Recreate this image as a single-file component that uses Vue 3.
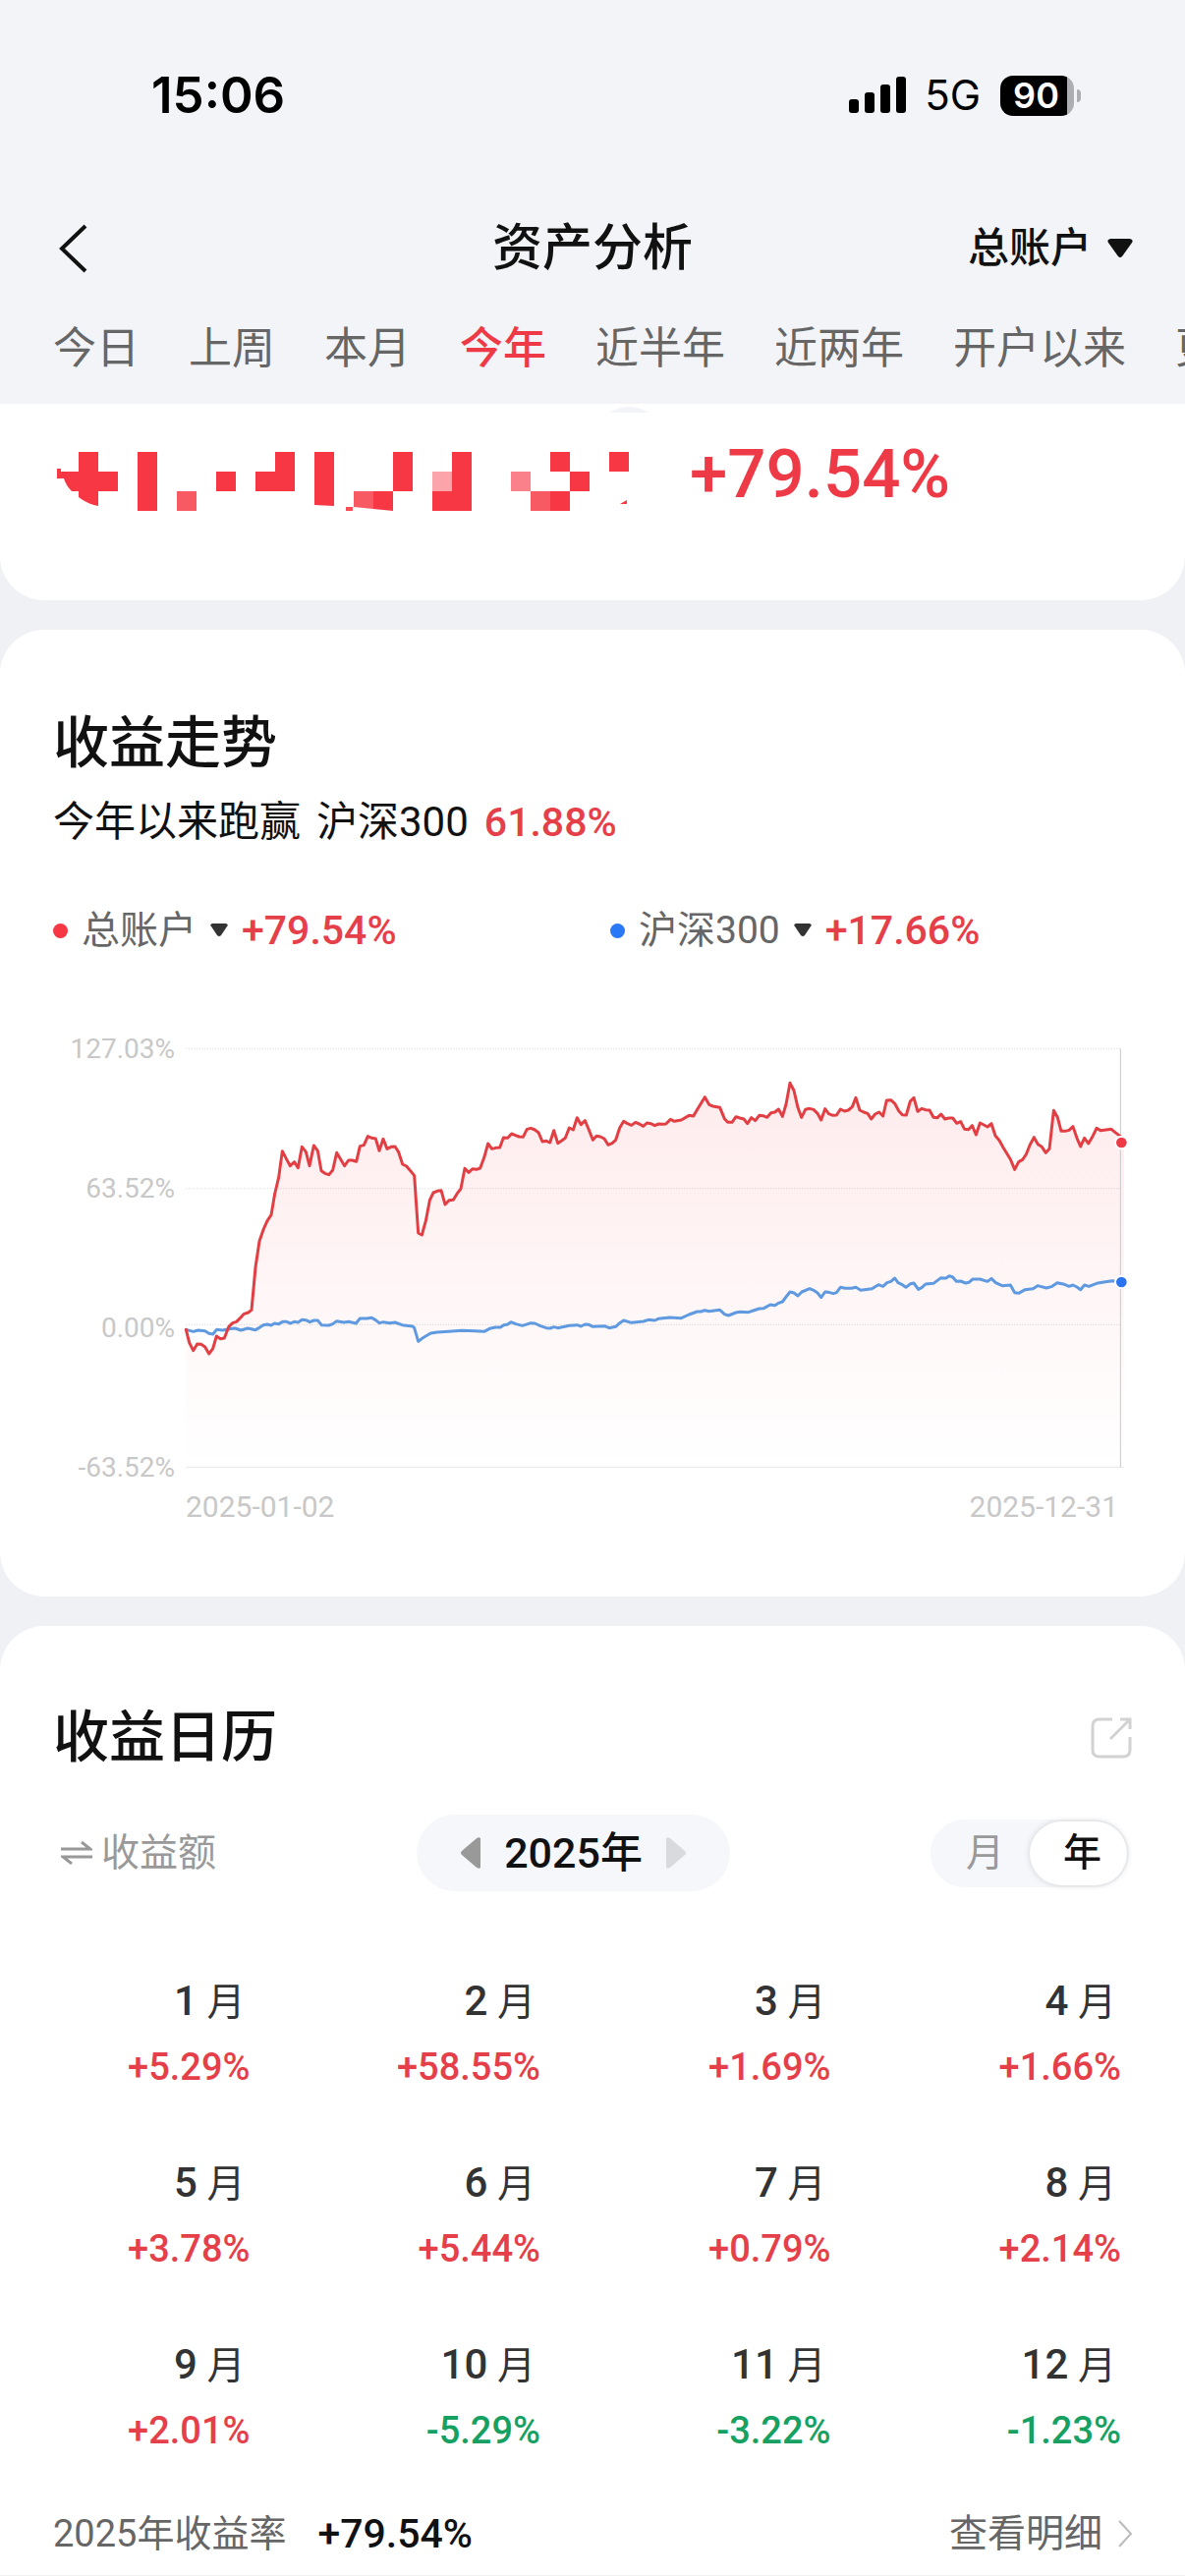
<script setup>
import { ref } from 'vue'

const tabs = ['今日', '上周', '本月', '今年', '近半年', '近两年', '开户以来', '更多']
const activeTab = ref('今年')
const period = ref('year')

const axis = ['127.03%', '63.52%', '0.00%', '-63.52%']

const months = [
  ['1', '+5.29%'], ['2', '+58.55%'], ['3', '+1.69%'], ['4', '+1.66%'],
  ['5', '+3.78%'], ['6', '+5.44%'], ['7', '+0.79%'], ['8', '+2.14%'],
  ['9', '+2.01%'], ['10', '-5.29%'], ['11', '-3.22%'], ['12', '-1.23%'],
]

// blocks hiding the amount: x, y, width, height, opacity
const blocks = [
  [80, 460, 20, 20, 1], [62, 480, 58, 7, 1],
  [140, 460, 20, 60, 1], [180, 500, 20, 20, 0.83], [220, 480, 20, 20, 1],
  [280, 460, 20, 20, 1], [260, 480, 40, 20, 1], [320, 460, 20, 54, 1],
  [352, 516, 7, 4, 0.9], [400, 460, 20, 40, 1],
  [440, 480, 20, 20, 0.45], [440, 500, 20, 20, 1], [460, 460, 20, 60, 1],
  [520, 480, 20, 20, 0.63], [540, 500, 20, 20, 0.83], [560, 500, 20, 20, 1],
  [560, 460, 20, 20, 1], [580, 480, 20, 20, 1], [620, 460, 20, 20, 1],
]

const account = '448,940 458,980 470,1004 482,984 494,985 506,993 518,1014 530,998 541,960 553,968 565,966 578,932 590,920 602,916 613,905 625,892 638,888 648,880 660,750 672,670 684,635 696,608 708,590 719,525 731,475 742,395 754,418 766,440 779,428 790,446 802,382 814,397 825,440 838,378 850,394 861,455 872,463 884,467 896,453 908,400 920,420 932,440 944,423 956,423 968,427 979,380 991,377 1003,350 1015,355 1027,357 1038,394 1050,358 1062,388 1074,382 1086,381 1097,398 1109,435 1121,441 1133,455 1145,470 1157,645 1168,651 1180,608 1192,545 1203,522 1215,517 1227,515 1239,558 1251,545 1264,544 1276,524 1287,510 1299,448 1311,460 1323,449 1335,451 1346,447 1358,415 1370,372 1382,388 1394,385 1406,384 1417,354 1430,355 1442,342 1454,347 1465,351 1477,352 1489,328 1501,325 1513,330 1524,338 1536,366 1548,364 1559,369 1571,332 1583,371 1595,363 1606,355 1618,324 1630,330 1642,293 1654,314 1666,302 1678,330 1690,361 1701,349 1713,351 1725,357 1737,376 1749,371 1760,361 1772,324 1784,304 1796,311 1808,316 1820,307 1832,312 1844,319 1855,309 1867,311 1879,317 1891,312 1903,313 1913,312 1927,298 1939,304 1960,300 1984,286 1997,288 2009,268 2032,230 2045,253 2057,258 2078,262 2092,296 2102,307 2115,307 2127,290 2139,294 2151,297 2162,311 2174,293 2186,302 2198,286 2210,287 2222,292 2234,278 2246,276 2257,267 2269,289 2280,252 2292,187 2304,210 2316,262 2327,292 2339,268 2352,265 2364,268 2376,280 2387,300 2399,266 2410,281 2423,286 2434,285 2446,267 2458,273 2470,270 2482,260 2493,232 2505,270 2517,276 2529,280 2540,297 2552,282 2564,276 2576,288 2587,240 2600,239 2612,250 2624,272 2635,284 2647,285 2659,243 2670,232 2682,274 2694,265 2706,269 2718,270 2730,292 2742,293 2753,282 2765,297 2777,294 2789,294 2801,310 2813,305 2825,328 2837,329 2848,317 2860,345 2872,309 2884,315 2895,321 2907,311 2919,348 2931,362 2943,384 2965,420 2978,451 2990,428 3002,421 3013,405 3025,375 3037,353 3049,374 3061,382 3073,400 3084,388 3097,271 3109,292 3120,334 3132,334 3144,331 3156,320 3168,355 3179,381 3191,355 3203,372 3215,352 3228,325 3240,332 3273,328 3285,338 3304,352'

const index300 = '448,940 470,946 485,942 506,944 518,952 530,954 542,940 560,942 578,938 598,936 615,942 637,936 660,941 672,934 684,926 696,924 708,927 718,921 731,923 743,916 755,916 767,921 778,916 790,918 802,910 814,911 826,917 838,912 850,912 862,926 884,927 896,923 908,914 930,918 944,916 967,921 979,906 1000,906 1015,904 1026,910 1038,920 1050,917 1070,920 1086,918 1108,926 1140,930 1145,935 1157,976 1170,966 1195,951 1215,948 1250,946 1290,943 1330,944 1358,946 1375,937 1392,933 1408,933 1418,926 1430,924 1440,917 1455,923 1475,928 1501,920 1513,921 1530,929 1548,935 1560,936 1571,932 1583,935 1618,928 1642,926 1654,930 1666,924 1678,925 1690,931 1725,929 1740,935 1760,931 1772,920 1784,912 1808,919 1844,915 1860,910 1879,912 1890,907 1925,903 1960,905 1984,894 2009,885 2020,885 2032,881 2045,884 2078,880 2092,893 2104,897 2127,888 2140,886 2165,887 2180,882 2198,876 2212,875 2232,864 2246,866 2255,860 2269,855 2280,840 2292,825 2304,828 2316,837 2328,825 2352,815 2364,820 2376,828 2387,842 2399,825 2410,826 2425,830 2434,827 2446,811 2460,814 2480,814 2493,811 2508,820 2542,815 2562,803 2576,808 2588,797 2600,793 2612,783 2622,797 2635,803 2646,811 2660,800 2670,798 2684,817 2694,812 2706,801 2730,799 2753,782 2768,783 2778,776 2789,780 2800,793 2813,792 2828,798 2838,796 2850,786 2872,786 2895,793 2907,784 2920,797 2940,806 2965,804 2978,827 2990,829 3010,818 3034,815 3048,806 3075,813 3090,809 3108,797 3130,802 3144,808 3156,804 3168,810 3179,818 3191,804 3205,808 3228,799 3250,795 3275,791 3304,794'
</script>

<template>
  <div class="page">
    <header class="top">
      <div class="status">
        <span class="clock">15:06</span>
        <div class="signals">
          <svg width="58" height="38" viewBox="0 0 58 38" aria-hidden="true">
            <rect x="0" y="23" width="10" height="14" rx="3" />
            <rect x="16" y="16" width="10" height="21" rx="3" />
            <rect x="32" y="8" width="10" height="29" rx="3" />
            <rect x="48" y="0" width="10" height="37" rx="3" />
          </svg>
          <span class="network">5G</span>
          <div class="battery">
            <span class="level">90</span>
            <i class="nub"></i>
          </div>
        </div>
      </div>

      <nav class="nav">
        <button class="back" aria-label="返回">
          <svg width="36" height="52" viewBox="0 0 36 52" aria-hidden="true">
            <path d="M34 3 10 26 34 49" fill="none" stroke="#111" stroke-width="4" />
          </svg>
        </button>
        <h1 class="title">资产分析</h1>
        <button class="account">
          总账户
          <svg width="26" height="20" viewBox="0 0 26 20" aria-hidden="true">
            <path d="M3 0H23Q27 1 25 4L15 18Q13 20 11 18L1 4Q-1 1 3 0Z" fill="#111" />
          </svg>
        </button>
      </nav>

      <div class="tabs">
        <button
          v-for="tab in tabs"
          :key="tab"
          class="tab"
          :class="{ active: tab === activeTab }"
          @click="activeTab = tab"
        >{{ tab }}</button>
      </div>
    </header>

    <main>
      <section class="card summary">
        <svg class="mosaic" width="608" height="112" viewBox="54 411 608 112" aria-hidden="true">
          <path d="M620 420Q640 408 661 420Z" fill="#f3f4f8" />
          <g fill="#f73844">
            <rect
              v-for="(b, i) in blocks"
              :key="i"
              :x="b[0]" :y="b[1]" :width="b[2]" :height="b[3]" :opacity="b[4]"
            />
            <path d="M58 477H62V480H120V500H100V515Q89 513 80 506V500H73Q67 494 65 487H58Z" />
            <path d="M320 513H340V515L320 514Z" />
            <path d="M360 500H380V518L360 516Z" opacity=".83" />
            <path d="M380 500H400V520L380 518Z" />
            <path d="M631 513 638 509V513Z" />
          </g>
        </svg>
        <strong class="total">+79.54%</strong>
      </section>

      <section class="card trend">
        <h2 class="heading">收益走势</h2>
        <p class="versus">
          <span>今年以来跑赢</span>
          <span>沪深300</span>
          <b class="pct">61.88%</b>
        </p>
        <div class="legend">
          <button class="series">
            <i class="dot red"></i>
            <span>总账户</span>
            <svg width="18" height="14" viewBox="0 0 18 14" aria-hidden="true">
              <path d="M2 0H16Q19 1 17 3L11 12Q9 14 7 12L1 3Q-1 1 2 0Z" fill="#333" />
            </svg>
            <b class="pct">+79.54%</b>
          </button>
          <button class="series">
            <i class="dot blue"></i>
            <span>沪深300</span>
            <svg width="18" height="14" viewBox="0 0 18 14" aria-hidden="true">
              <path d="M2 0H16Q19 1 17 3L11 12Q9 14 7 12L1 3Q-1 1 2 0Z" fill="#333" />
            </svg>
            <b class="pct">+17.66%</b>
          </button>
        </div>
        <div class="chart">
          <div class="axis">
            <span v-for="a in axis" :key="a">{{ a }}</span>
          </div>
          <svg class="plot" viewBox="438 39 2898 1368" role="img" aria-label="收益走势">
            <defs>
              <linearGradient id="fade" x1="0" y1="187" x2="0" y2="1360" gradientUnits="userSpaceOnUse">
                <stop offset="0" stop-color="#f73844" stop-opacity=".1" />
                <stop offset="1" stop-color="#f73844" stop-opacity="0" />
              </linearGradient>
            </defs>
            <g stroke="#e6e6e8" stroke-width="4" stroke-dasharray="4 4">
              <path d="M448 82H3301" />
              <path d="M448 509H3301" />
              <path d="M448 925H3301" />
            </g>
            <path d="M448 1360H3312" stroke="#ececee" stroke-width="4" />
            <polygon :points="account + ' 3312,360 3312,1360 448,1360'" fill="url(#fade)" />
            <path d="M3301 82V1360" stroke="#c8c8ca" stroke-width="3" />
            <g fill="none" stroke-width="9" stroke-linejoin="round" stroke-linecap="round">
              <polyline :points="index300" stroke="#5f9ae0" />
              <polyline :points="account" stroke="#e23f45" />
            </g>
            <g stroke="#fff" stroke-width="6">
              <circle cx="3304" cy="369" r="19" fill="#ee3a46" />
              <circle cx="3304" cy="795" r="19" fill="#2a74f0" />
            </g>
          </svg>
        </div>
        <div class="dates">
          <span>2025-01-02</span>
          <span>2025-12-31</span>
        </div>
      </section>

      <section class="card calendar">
        <div class="calendar-head">
          <h2 class="heading">收益日历</h2>
          <button class="share" aria-label="分享">
            <svg width="42" height="42" viewBox="0 0 42 42" fill="none" stroke="#d2d2d2" stroke-width="3" aria-hidden="true">
              <path d="M22 2H9Q2 2 2 9V33Q2 40 9 40H33Q40 40 40 33V20" />
              <path d="M20 22 40 2M30 2H40V12" />
            </svg>
          </button>
        </div>

        <div class="controls">
          <button class="swap">
            <svg width="32" height="24" viewBox="0 0 32 24" fill="none" stroke="#999" stroke-width="3" aria-hidden="true">
              <path d="M0 8H30L21 1M32 16H2L11 23" />
            </svg>
            收益额
          </button>
          <div class="year">
            <button aria-label="上一年">
              <svg width="20" height="32" viewBox="0 0 20 32" aria-hidden="true">
                <path d="M20 1V31Q18 33 15 30L1 18Q-1 16 1 14L15 2Q18 -1 20 1Z" fill="#999" />
              </svg>
            </button>
            <span>2025年</span>
            <button aria-label="下一年">
              <svg width="20" height="32" viewBox="0 0 20 32" aria-hidden="true">
                <path d="M0 1V31Q2 33 5 30L19 18Q21 16 19 14L5 2Q2 -1 0 1Z" fill="#d8dadd" />
              </svg>
            </button>
          </div>
          <div class="switch">
            <button :class="{ on: period === 'month' }" @click="period = 'month'">月</button>
            <button :class="{ on: period === 'year' }" @click="period = 'year'">年</button>
          </div>
        </div>

        <ul class="months">
          <li v-for="m in months" :key="m[0]">
            <span class="month"><b>{{ m[0] }}</b> 月</span>
            <span class="change" :class="{ down: m[1][0] === '-' }">{{ m[1] }}</span>
          </li>
        </ul>

        <footer class="foot">
          <span class="foot-label">2025年收益率</span>
          <b class="foot-value">+79.54%</b>
          <a class="more" href="#">
            查看明细
            <svg width="16" height="28" viewBox="0 0 16 28" aria-hidden="true">
              <path d="M2 1 14 14 2 27" fill="none" stroke="#bbb" stroke-width="2" />
            </svg>
          </a>
        </footer>
      </section>
    </main>
  </div>
</template>

<style>
body {
  margin: 0;
  background: #f0f1f5;
}
</style>

<style scoped>
.page {
  overflow: hidden;
  background: #f0f1f5;
  color: #111;
  font-family: Roboto, "Noto Sans CJK SC", sans-serif;
}
button {
  display: flex;
  align-items: center;
  margin: 0;
  padding: 0;
  border: 0;
  background: none;
  color: inherit;
  font: inherit;
  white-space: nowrap;
}
h1, h2, p, ul {
  margin: 0;
  padding: 0;
}
svg {
  display: block;
  flex: none;
}

.top {
  padding: 64px 0 26px;
  background: #f3f4f8;
}
.status {
  display: flex;
  align-items: center;
  justify-content: space-between;
  padding: 0 106px 0 154px;
  font-family: Inter, sans-serif;
  line-height: 66px;
  color: #000;
}
.clock {
  font-size: 51px;
  font-weight: 600;
}
.signals {
  display: flex;
  align-items: center;
}
.network {
  margin: 0 20px 0 19px;
  font-size: 42px;
}
.battery {
  position: relative;
  width: 75px;
  height: 41px;
  margin-right: 7px;
  border-radius: 13px;
  background: linear-gradient(90deg, #000 68px, #adaeb1 68px);
}
.level {
  display: block;
  width: 73px;
  color: #fff;
  font-size: 36px;
  font-weight: 600;
  line-height: 41px;
  text-align: center;
}
.nub {
  position: absolute;
  top: 14px;
  right: -7px;
  width: 4px;
  height: 13px;
  border-radius: 0 6px 6px 0;
  background: #adaeb1;
}

.nav {
  display: grid;
  grid-template-columns: 1fr auto 1fr;
  align-items: center;
  height: 80px;
  margin-top: 83px;
  padding: 0 53px;
}
.title {
  font-size: 51px;
  font-weight: 500;
  line-height: 80px;
}
.account {
  gap: 16px;
  justify-self: end;
  font-size: 42px;
  font-weight: 500;
  line-height: 60px;
}
.tabs {
  display: flex;
  gap: 50px;
  margin-top: 32px;
  padding-left: 54px;
}
.tab {
  flex: none;
  color: #666;
  font-size: 44px;
  line-height: 60px;
}
.tab.active {
  color: #ee3a46;
  font-weight: 500;
}

.card {
  border-radius: 45px;
  background: #fff;
}
.card + .card {
  margin-top: 30px;
}
.summary {
  display: flex;
  align-items: flex-end;
  gap: 40px;
  padding: 0 54px 88px;
  border-radius: 0 0 45px 45px;
}
.total {
  color: #ee3a46;
  font-size: 69px;
  font-weight: 500;
  line-height: 80px;
}

.heading {
  font-size: 57px;
  font-weight: 500;
  line-height: 72px;
}
.trend {
  padding: 80px 54px 76px;
}
.versus {
  display: flex;
  align-items: center;
  gap: 16px;
  height: 56px;
  margin-top: 16px;
  font-size: 42px;
  line-height: 56px;
}
.pct {
  color: #e5404a;
  font-size: 41px;
  font-weight: 500;
}
.legend {
  display: grid;
  grid-template-columns: 1fr 1fr;
  gap: 36px;
  height: 48px;
  margin-top: 58px;
}
.series {
  gap: 14px;
  color: #666;
  font-size: 39px;
  line-height: 48px;
}
.dot {
  width: 15px;
  height: 15px;
  border-radius: 50%;
}
.red {
  background: #f73844;
}
.blue {
  background: #2b78f6;
}
.chart {
  display: flex;
  gap: 8px;
  margin-top: 82px;
}
.axis {
  display: flex;
  flex: none;
  flex-direction: column;
  justify-content: space-between;
  width: 124px;
  color: #c8c8c8;
  font-size: 28px;
  line-height: 30px;
  text-align: right;
}
.plot {
  flex: 1;
  min-width: 0;
}
.dates {
  display: flex;
  justify-content: space-between;
  margin-top: 10px;
  padding: 0 14px 0 135px;
  color: #c8c8c8;
  font-size: 30px;
  line-height: 30px;
}

.calendar {
  padding-top: 78px;
  border-bottom: 1px solid #eee;
  border-radius: 45px 45px 0 0;
}
.calendar-head {
  display: flex;
  align-items: center;
  justify-content: space-between;
  padding: 0 54px;
}
.controls {
  display: flex;
  align-items: center;
  justify-content: space-between;
  margin-top: 42px;
  padding: 0 57px 0 62px;
}
.swap {
  gap: 9px;
  color: #999;
  font-size: 39px;
  line-height: 56px;
}
.year {
  display: flex;
  align-items: center;
  gap: 24px;
  padding: 0 45px;
  border-radius: 39px;
  background: #f5f7fa;
  font-size: 43px;
  font-weight: 500;
  line-height: 78px;
}
.switch {
  display: flex;
  justify-content: space-between;
  box-sizing: border-box;
  width: 202px;
  padding: 2px;
  border-radius: 35px;
  background: #f5f7fa;
}
.switch button {
  box-sizing: border-box;
  justify-content: center;
  width: 99px;
  padding-left: 8px;
  border-radius: 33px;
  color: #999;
  font-size: 39px;
  line-height: 65px;
}
.switch button.on {
  background: #fff;
  box-shadow: 0 0 6px rgba(0, 0, 0, 0.16);
  color: #111;
  font-weight: 500;
}

.months {
  display: grid;
  grid-template-columns: repeat(4, 1fr);
  gap: 53px 95px;
  margin-top: 79px;
  padding: 0 65px 0 54px;
  list-style: none;
}
.months li {
  display: flex;
  flex-direction: column;
  align-items: flex-end;
  height: 132px;
  line-height: 66px;
  white-space: nowrap;
}
.month {
  padding-right: 5px;
  color: #333;
  font-size: 39px;
}
.month b {
  font-size: 42px;
  font-weight: 500;
}
.change {
  color: #e5404a;
  font-size: 38px;
  font-weight: 500;
}
.change.down {
  color: #16a163;
}

.foot {
  display: flex;
  align-items: center;
  margin-top: 45px;
  padding: 0 53px 14px 54px;
  line-height: 56px;
}
.foot-label {
  color: #666;
  font-size: 38px;
}
.foot-value {
  margin-left: 32px;
  font-size: 41px;
  font-weight: 500;
}
.more {
  display: flex;
  align-items: center;
  gap: 15px;
  margin-left: auto;
  color: #666;
  font-size: 39px;
  text-decoration: none;
}
</style>
